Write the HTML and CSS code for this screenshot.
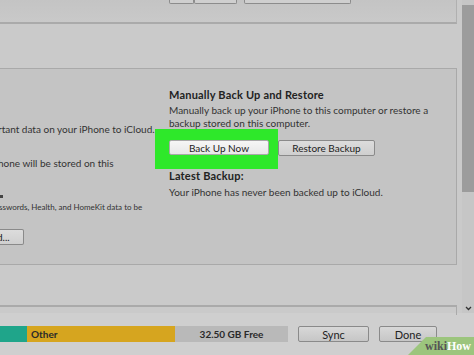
FILE: index.html
```html
<!DOCTYPE html>
<html lang="en">
<head>
    <meta charset="UTF-8">
    <title>Backups</title>
    <link rel="stylesheet" href="styles.css">
</head>
<body>
    <div class="window">
        <div class="main">
            <div class="content">
                <div class="top-panel">
                    <div class="top-buttons">
                        <span class="tbtn seg-a"></span><span class="tbtn seg-b"></span>
                        <span class="tbtn wide"></span>
                    </div>
                </div>
                <div class="backup-panel">
                    <div class="col-left">
                        <p class="line first">rtant data on your iPhone to iCloud.</p>
                        <p class="line second">hone will be stored on this</p>
                        <span class="dot"></span>
                        <p class="small">sswords, Health, and HomeKit data to be</p>
                        <span class="btn cut">d...</span>
                    </div>
                    <div class="col-right">
                        <h3>Manually Back Up and Restore</h3>
                        <p class="desc">Manually back up your iPhone to this computer or restore a backup stored on this computer.</p>
                        <div class="actions">
                            <div class="highlight">
                                <span class="btn primary">Back Up Now</span>
                            </div>
                            <span class="btn">Restore Backup</span>
                        </div>
                        <h3 class="latest">Latest Backup:</h3>
                        <p class="status">Your iPhone has never been backed up to iCloud.</p>
                    </div>
                </div>
                <div class="next-panel"></div>
            </div>
            <div class="scrollbar">
                <div class="thumb"></div>
                <svg class="chev" width="7" height="5" viewBox="0 0 7 5">
                    <polyline points="1,1 3.5,3.5 6,1" fill="none" stroke="#333" stroke-width="1.3"/>
                </svg>
            </div>
        </div>
        <div class="bottom-bar">
            <div class="storage">
                <span class="seg apps"></span>
                <span class="seg other">Other</span>
                <span class="seg free">32.50 GB Free</span>
            </div>
            <span class="btn big">Sync</span>
            <span class="btn big done">Done</span>
        </div>
        <div class="wikihow"><span class="wiki">wiki</span><span class="how">How</span></div>
    </div>
</body>
</html>
```

FILE: styles.css
```css
body {
    margin: 0;
    background-color: #cacaca;
    font-family: Lato, "Open Sans", sans-serif;
    color: #333;
    overflow: hidden;
}
.window {
    position: relative;
    width: 474px;
    height: 355px;
    overflow: hidden;
}
.main {
    display: flex;
    height: 313px;
}
.content {
    width: 457px;
}

/* panel cut off at the top */
.top-panel {
    height: 22px;
    background: linear-gradient(#c4c4c4, #c9c9c9);
    border-right: 1px solid #b0b0b0;
    border-bottom: 2px solid #aaaaaa;
}
.top-buttons {
    display: flex;
    padding-left: 169px;
}
.tbtn {
    height: 3px;
    border: 1px solid #8c8c8c;
    border-top: none;
    border-radius: 0 0 2px 2px;
    background-color: #cfcfcf;
}
.seg-a { width: 23px; }
.seg-b { width: 41px; }
.wide {
    width: 105px;
    margin-left: 7px;
}

/* backup panel */
.backup-panel {
    display: flex;
    margin-top: 44px;
    height: 195px;
    background-color: #c4c4c4;
    border: 1px solid #a9a9a9;
    border-left: none;
}
.col-left {
    width: 155px;
    font-size: 10px;
    white-space: nowrap;
}
.line {
    margin: 0;
    line-height: 14px;
    text-indent: -2px;
}
.first { margin-top: 53px; }
.second { margin-top: 20px; }
.dot {
    display: block;
    width: 3px;
    height: 3px;
    margin-top: 25px;
    background-color: #444;
}
.small {
    margin: 3px 0 0 0;
    font-size: 8px;
    line-height: 12px;
    text-indent: -1px;
}
.btn.cut {
    width: 27px;
    margin-top: 16px;
    margin-left: -3px;
    justify-content: flex-start;
    border-left: none;
    height: 16px;
}

.col-right {
    padding-left: 14px;
    font-size: 10px;
}
.col-right h3 {
    margin: 19px 0 0 0;
    font-size: 11px;
    letter-spacing: 0.2px;
    line-height: 14px;
    color: #222;
}
.desc {
    margin: 2px 0 0 0;
    width: 270px;
    line-height: 13px;
}
.actions {
    display: flex;
    align-items: flex-start;
    gap: 9px;
    margin-top: 10px;
}
/* green highlight around the button */
.highlight {
    position: relative;
    margin: -11px -9px -14px -14px;
    padding: 11px 9px 14px 14px;
    background-color: #2ee82a;
}
.btn {
    display: flex;
    align-items: center;
    justify-content: center;
    box-sizing: border-box;
    height: 16px;
    width: 97px;
    border: 1px solid #8a8a8a;
    border-radius: 2px;
    background: linear-gradient(#dcdcdc, #cfcfcf);
    font-size: 10px;
    color: #222;
}
.btn.primary {
    width: 100px;
    height: 15px;
    background: linear-gradient(#f6f6f6, #e8e8e8);
    border-color: #a8a8a8;
}
.col-right .latest {
    margin-top: 13px;
}
.status {
    margin: 2px 0 0 0;
    line-height: 14px;
}
.next-panel {
    margin-top: 40px;
    height: 8px;
    border-top: 2px solid #aaaaaa;
    border-right: 1px solid #aaaaaa;
}

/* scrollbar */
.scrollbar {
    position: relative;
    margin-left: 5px;
    width: 12px;
    background-color: #c6c6c6;
}
.thumb {
    margin-top: 5px;
    height: 187px;
    background-color: #9c9c9c;
}
.chev {
    position: absolute;
    left: 3px;
    top: 306px;
    display: block;
}

/* bottom bar */
.bottom-bar {
    display: flex;
    align-items: center;
    gap: 10px;
    height: 42px;
    background-color: #cfcfcf;
}
.storage {
    display: flex;
    width: 288px;
    height: 16px;
    font-size: 10px;
    font-weight: bold;
}
.seg {
    display: flex;
    align-items: center;
}
.apps {
    width: 27px;
    background-color: #1fa58a;
}
.other {
    width: 144px;
    padding-left: 4px;
    background-color: #d6a51f;
    color: #2a2a2a;
}
.free {
    flex: 1;
    justify-content: center;
    background-color: #b9b9b9;
    color: #2a2a2a;
}
.btn.big {
    width: 71px;
    height: 16px;
    font-size: 11px;
    background: linear-gradient(#d8d8d8, #c6c6c6);
}
.btn.big.done {
    width: 58px;
}

/* watermark */
.wikihow {
    position: absolute;
    right: 0;
    bottom: 0;
    width: 66px;
    height: 18px;
    padding-right: 3px;
    box-sizing: border-box;
    background-color: #9cc57d;
    clip-path: polygon(18px 0, 100% 0, 100% 100%, 0 100%);
    text-align: right;
    font-family: "Liberation Serif", serif;
    font-weight: bold;
    font-size: 12px;
    line-height: 18px;
}
.wiki { color: #555; }
.how { color: #fff; }
```
